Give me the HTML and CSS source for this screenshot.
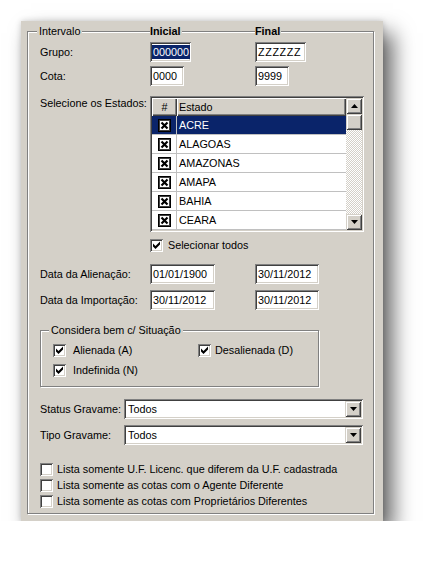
FILE: index.html
```html
<!DOCTYPE html>
<html>
<head>
<meta charset="utf-8">
<title>Intervalo</title>
<link rel="stylesheet" href="styles.css">
</head>
<body>
<div class="panel">
  <div class="group main">
    <div class="gb-head">
      <span class="legend l-intervalo">Intervalo</span>
      <span class="legend b">Inicial</span>
      <span class="legend b">Final</span>
    </div>

    <div class="row r-grupo">
      <span class="lbl">Grupo:</span>
      <div class="edit w-grupo1"><span class="seltext">000000</span></div>
      <div class="edit w-grupo2 zz">ZZZZZZ</div>
    </div>

    <div class="row r-cota">
      <span class="lbl">Cota:</span>
      <div class="edit w-cota">0000</div>
      <div class="edit w-cota">9999</div>
    </div>

    <div class="row r-estados">
      <span class="lbl lbl-top">Selecione os Estados:</span>
      <div class="grid">
        <div class="gmain">
          <div class="ghead">
            <div class="hc c1">#</div>
            <div class="hc c2">Estado</div>
          </div>
          <div class="grow selrow">
            <div class="gc c1"><svg class="xbox" width="13" height="13" viewBox="0 0 13 13"><rect x="0.5" y="0.5" width="12" height="12" fill="#fff" stroke="#000"/><rect x="1.5" y="1.5" width="10" height="10" fill="none" stroke="#404040"/><path d="M3.5 3.5 L9.5 9.5 M9.5 3.5 L3.5 9.5" stroke="#000" stroke-width="2.2"/></svg></div>
            <div class="gc c2">ACRE</div>
          </div>
          <div class="grow">
            <div class="gc c1"><svg class="xbox" width="13" height="13" viewBox="0 0 13 13"><rect x="0.5" y="0.5" width="12" height="12" fill="#fff" stroke="#000"/><rect x="1.5" y="1.5" width="10" height="10" fill="none" stroke="#404040"/><path d="M3.5 3.5 L9.5 9.5 M9.5 3.5 L3.5 9.5" stroke="#000" stroke-width="2.2"/></svg></div>
            <div class="gc c2">ALAGOAS</div>
          </div>
          <div class="grow">
            <div class="gc c1"><svg class="xbox" width="13" height="13" viewBox="0 0 13 13"><rect x="0.5" y="0.5" width="12" height="12" fill="#fff" stroke="#000"/><rect x="1.5" y="1.5" width="10" height="10" fill="none" stroke="#404040"/><path d="M3.5 3.5 L9.5 9.5 M9.5 3.5 L3.5 9.5" stroke="#000" stroke-width="2.2"/></svg></div>
            <div class="gc c2">AMAZONAS</div>
          </div>
          <div class="grow">
            <div class="gc c1"><svg class="xbox" width="13" height="13" viewBox="0 0 13 13"><rect x="0.5" y="0.5" width="12" height="12" fill="#fff" stroke="#000"/><rect x="1.5" y="1.5" width="10" height="10" fill="none" stroke="#404040"/><path d="M3.5 3.5 L9.5 9.5 M9.5 3.5 L3.5 9.5" stroke="#000" stroke-width="2.2"/></svg></div>
            <div class="gc c2">AMAPA</div>
          </div>
          <div class="grow">
            <div class="gc c1"><svg class="xbox" width="13" height="13" viewBox="0 0 13 13"><rect x="0.5" y="0.5" width="12" height="12" fill="#fff" stroke="#000"/><rect x="1.5" y="1.5" width="10" height="10" fill="none" stroke="#404040"/><path d="M3.5 3.5 L9.5 9.5 M9.5 3.5 L3.5 9.5" stroke="#000" stroke-width="2.2"/></svg></div>
            <div class="gc c2">BAHIA</div>
          </div>
          <div class="grow">
            <div class="gc c1"><svg class="xbox" width="13" height="13" viewBox="0 0 13 13"><rect x="0.5" y="0.5" width="12" height="12" fill="#fff" stroke="#000"/><rect x="1.5" y="1.5" width="10" height="10" fill="none" stroke="#404040"/><path d="M3.5 3.5 L9.5 9.5 M9.5 3.5 L3.5 9.5" stroke="#000" stroke-width="2.2"/></svg></div>
            <div class="gc c2">CEARA</div>
          </div>
        </div>
        <div class="vscroll">
          <div class="sbtn"><svg width="7" height="4" viewBox="0 0 7 4"><path d="M3.5 0 L7 4 L0 4 Z" fill="#000"/></svg></div>
          <div class="sbtn thumb"></div>
          <div class="track"></div>
          <div class="sbtn"><svg width="7" height="4" viewBox="0 0 7 4"><path d="M0 0 L7 0 L3.5 4 Z" fill="#000"/></svg></div>
        </div>
      </div>
    </div>

    <div class="row r-todos">
      <span></span>
      <label class="chk chk-todos">
        <span class="cb"><svg width="13" height="13" viewBox="0 0 13 13"><polygon points="3,4.5 5.5,7 10,2.5 10,5.5 5.5,10 3,7.5" fill="#000"/></svg></span>
        <span>Selecionar todos</span>
      </label>
    </div>

    <div class="row r-data1">
      <span class="lbl">Data da Alienação:</span>
      <div class="edit w-data1">01/01/1900</div>
      <div class="edit w-data2">30/11/2012</div>
    </div>

    <div class="row r-data2">
      <span class="lbl">Data da Importação:</span>
      <div class="edit w-data1">30/11/2012</div>
      <div class="edit w-data2">30/11/2012</div>
    </div>

    <div class="group situacao">
      <div class="gb-head2">
        <span class="legend l-sit">Considera bem c/ Situação</span>
      </div>
      <div class="sit-grid">
        <label class="chk chk-sit">
          <span class="cb"><svg width="13" height="13" viewBox="0 0 13 13"><polygon points="3,4.5 5.5,7 10,2.5 10,5.5 5.5,10 3,7.5" fill="#000"/></svg></span>
          <span>Alienada (A)</span>
        </label>
        <label class="chk chk-sit2">
          <span class="cb"><svg width="13" height="13" viewBox="0 0 13 13"><polygon points="3,4.5 5.5,7 10,2.5 10,5.5 5.5,10 3,7.5" fill="#000"/></svg></span>
          <span>Desalienada (D)</span>
        </label>
        <label class="chk chk-sit">
          <span class="cb"><svg width="13" height="13" viewBox="0 0 13 13"><polygon points="3,4.5 5.5,7 10,2.5 10,5.5 5.5,10 3,7.5" fill="#000"/></svg></span>
          <span>Indefinida (N)</span>
        </label>
      </div>
    </div>

    <div class="crow r-status">
      <span class="lbl">Status Gravame:</span>
      <div class="combo">
        <span class="ctext">Todos</span>
        <span class="cbtn"><svg width="7" height="4" viewBox="0 0 7 4"><path d="M0 0 L7 0 L3.5 4 Z" fill="#000"/></svg></span>
      </div>
    </div>

    <div class="crow r-tipo">
      <span class="lbl">Tipo Gravame:</span>
      <div class="combo">
        <span class="ctext">Todos</span>
        <span class="cbtn"><svg width="7" height="4" viewBox="0 0 7 4"><path d="M0 0 L7 0 L3.5 4 Z" fill="#000"/></svg></span>
      </div>
    </div>

    <div class="list">
      <label class="chk chk-list"><span class="cb"></span><span>Lista somente U.F. Licenc. que diferem da U.F. cadastrada</span></label>
      <label class="chk chk-list"><span class="cb"></span><span>Lista somente as cotas com o Agente Diferente</span></label>
      <label class="chk chk-list"><span class="cb"></span><span>Lista somente as cotas com Proprietários Diferentes</span></label>
    </div>
  </div>
</div>
</body>
</html>
```

FILE: styles.css
```css
* { box-sizing: border-box; }

html, body {
  margin: 0;
  padding: 0;
  background: #fff;
}

body {
  font-family: "Liberation Sans", Arial, sans-serif;
  font-size: 10.8px;
  line-height: 13px;
  color: #000;
}

.panel {
  margin: 21px 0 0 21px;
  width: 362px;
  height: 500px;
  background: #d4d0c8;
  padding: 10px 0 0 6px;
  box-shadow: 10px 12px 20px rgba(0, 0, 0, 0.6), 0 0 6px rgba(0, 0, 0, 0.18);
}

.group {
  border: 1px solid #808080;
  box-shadow: inset 1px 1px 0 #fff, 1px 1px 0 #fff;
}

.main {
  width: 347px;
  height: 483px;
  padding: 0 10px 0 12px;
}

.gb-head {
  display: grid;
  grid-template-columns: 110px 105px auto;
  margin-top: -7px;
  height: 13px;
}

.legend {
  background: #d4d0c8;
  justify-self: start;
  padding-right: 1px;
  white-space: nowrap;
}

.legend.b { font-weight: bold; }

.l-intervalo {
  margin-left: -3px;
  padding: 0 2px;
}

.row {
  display: grid;
  grid-template-columns: 110px 105px auto;
  align-items: center;
}

.lbl { white-space: nowrap; }

.lbl-top {
  align-self: start;
  padding-top: 1px;
}

.r-grupo { margin-top: 4px; }
.r-cota { margin-top: 4px; }
.r-estados { margin-top: 10px; }
.r-todos { margin-top: 7px; }
.r-data1 { margin-top: 12px; }
.r-data2 { margin-top: 6px; }

.edit {
  height: 20px;
  background: #fff;
  box-shadow: inset 1px 1px 0 #808080, inset -1px -1px 0 #fff, inset 2px 2px 0 #404040, inset -2px -2px 0 #d4d0c8;
  padding: 0 2px 0 3px;
  display: flex;
  align-items: center;
  overflow: hidden;
  white-space: nowrap;
}

.w-grupo1 { width: 41px; padding-left: 2px; }
.w-grupo2 { width: 51px; }
.w-cota { width: 34px; }
.w-data1 { width: 65px; }
.w-data2 { width: 64px; }

.zz { letter-spacing: 0.6px; }

.seltext {
  background: #0a246a;
  color: #fff;
  padding: 0 1px;
  line-height: 14px;
}

/* grid */
.grid {
  grid-column: 2 / 4;
  width: 214px;
  height: 136px;
  padding: 2px;
  background: #fff;
  box-shadow: inset 1px 1px 0 #808080, inset -1px -1px 0 #fff, inset 2px 2px 0 #404040, inset -2px -2px 0 #d4d0c8;
  display: flex;
  overflow: hidden;
}

.gmain {
  flex: 1;
  display: flex;
  flex-direction: column;
  overflow: hidden;
}

.ghead {
  display: flex;
  height: 18px;
  flex: none;
}

.hc {
  background: #d4d0c8;
  box-shadow: inset 1px 1px 0 #fff, inset -1px -1px 0 #404040, inset -2px -2px 0 #808080;
  display: flex;
  align-items: center;
  height: 18px;
}

.hc.c1 { justify-content: center; }
.hc.c2 { padding-left: 2px; }

.c1 { width: 25px; flex: none; }
.c2 { flex: 1; }

.grow {
  display: flex;
  height: 19px;
  flex: none;
  border-bottom: 1px solid #c0c0c0;
}

.gc {
  display: flex;
  align-items: center;
  height: 18px;
}

.gc.c1 {
  justify-content: center;
  border-right: 1px solid #c0c0c0;
}

.gc.c2 { padding-left: 2px; }

.selrow {
  background: #0a246a;
  color: #fff;
}

.xbox { display: block; }

.vscroll {
  width: 16px;
  flex: none;
  display: flex;
  flex-direction: column;
}

.sbtn {
  height: 16px;
  flex: none;
  background: #d4d0c8;
  box-shadow: inset 1px 1px 0 #d4d0c8, inset -1px -1px 0 #404040, inset 2px 2px 0 #fff, inset -2px -2px 0 #808080;
  display: flex;
  align-items: center;
  justify-content: center;
}

.sbtn svg { display: block; }

.track {
  flex: 1;
  background: repeating-conic-gradient(#d4d0c8 0 25%, #fff 0 50%) 0 0 / 2px 2px;
}

/* checkboxes */
.chk {
  display: flex;
  align-items: center;
  height: 13px;
  white-space: nowrap;
}

.cb {
  width: 13px;
  height: 13px;
  flex: none;
  background: #fff;
  box-shadow: inset 1px 1px 0 #808080, inset -1px -1px 0 #fff, inset 2px 2px 0 #404040, inset -2px -2px 0 #d4d0c8;
}

.cb svg { display: block; }

.chk-todos .cb { margin-right: 5px; }

/* situacao group */
.situacao {
  margin-top: 20px;
  width: 279px;
  height: 57px;
}

.gb-head2 {
  display: flex;
  margin-top: -7px;
  height: 13px;
}

.l-sit {
  margin-left: 8px;
  padding: 0 2px;
}

.sit-grid {
  display: grid;
  grid-template-columns: 145px auto;
  row-gap: 7px;
  margin-top: 7px;
  padding-left: 12px;
}

.chk-sit .cb { margin-right: 7px; }
.chk-sit2 .cb { margin-right: 4px; }

/* combos */
.crow {
  display: flex;
  align-items: center;
}

.crow .lbl { width: 84px; flex: none; }

.r-status { margin-top: 12px; }
.r-tipo { margin-top: 6px; }

.combo {
  width: 239px;
  height: 20px;
  background: #fff;
  box-shadow: inset 1px 1px 0 #808080, inset -1px -1px 0 #fff, inset 2px 2px 0 #404040, inset -2px -2px 0 #d4d0c8;
  display: flex;
  align-items: center;
  padding: 2px;
}

.ctext {
  flex: 1;
  padding-left: 2px;
}

.cbtn {
  width: 16px;
  height: 16px;
  flex: none;
  background: #d4d0c8;
  box-shadow: inset 1px 1px 0 #d4d0c8, inset -1px -1px 0 #404040, inset 2px 2px 0 #fff, inset -2px -2px 0 #808080;
  display: flex;
  align-items: center;
  justify-content: center;
}

.cbtn svg { display: block; }

/* bottom list */
.list {
  margin-top: 18px;
  display: flex;
  flex-direction: column;
  gap: 3px;
}

.chk-list .cb { margin-right: 4px; }
```
